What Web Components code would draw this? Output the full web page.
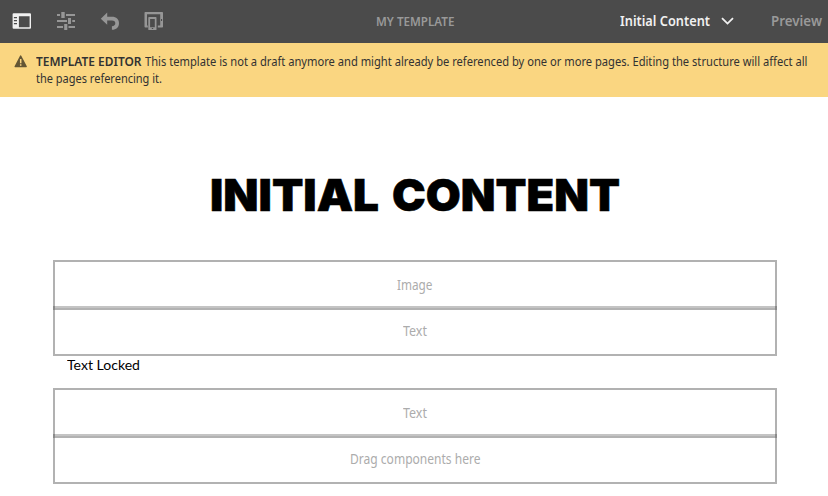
<!DOCTYPE html>
<html lang="en">
<head>
<meta charset="utf-8">
<title>Template Editor</title>
<style>
  html, body { margin: 0; height: 100%; overflow: hidden; background: #fff; }
</style>
</head>
<body>
<template-editor></template-editor>
<script>
const define = (name, html, setup) => {
  const tpl = document.createElement('template');
  tpl.innerHTML = html;
  customElements.define(name, class extends HTMLElement {
    connectedCallback() {
      if (this.shadowRoot) return;
      this.attachShadow({ mode: 'open' }).append(tpl.content.cloneNode(true));
      if (setup) setup.call(this, this.shadowRoot);
    }
  });
};

/* A single line of text condensed or widened to the given width. */
define('fit-text', `
  <style>
    :host { display: block; flex: none; white-space: nowrap; }
    span { display: inline-block; transform-origin: 0 50%; vertical-align: top; }
  </style>
  <span></span>`, function (root) {
  const span = root.querySelector('span');
  span.textContent = this.textContent;
  const width = Number(this.getAttribute('width'));
  this.style.width = width + 'px';
  const natural = span.getBoundingClientRect().width;
  if (natural) span.style.transform = 'scaleX(' + width / natural + ')';
});

define('tool-icon', `
  <style>
    :host { display: block; flex: none; width: 20px; height: 20px; color: #969696; }
    svg { display: none; width: 20px; height: 20px; overflow: visible; }
    :host([name=rail]) { color: #f0f0f0; }
    :host([name=rail]) .rail, :host([name=sliders]) .sliders,
    :host([name=undo]) .undo, :host([name=device]) .device { display: block; }
  </style>
  <svg class="rail" viewBox="0 0 20 20"><path fill="currentColor" fill-rule="evenodd" d="M1.6 2.3H18a1 1 0 0 1 1 1V16.8a1 1 0 0 1-1 1H1.6a1 1 0 0 1-1-1V3.3a1 1 0 0 1 1-1ZM6.9 5.3V16.3H17.6V5.3ZM1.9 6V7.2H5V6ZM1.9 9V10.2H5V9ZM1.9 12V13.2H5V12Z"/></svg>
  <svg class="sliders" viewBox="0 0 20 20"><path fill="currentColor" d="M1 3H4V5H1ZM5.3 1H8.7V7H5.3ZM10 3H19V5H10ZM1 9H11V11H1ZM12 7H15V13H12ZM16.3 9H19V11H16.3ZM1 15H7V17H1ZM8.2 13H11.3V19H8.2ZM12.5 15H19V17H12.5Z"/></svg>
  <svg class="undo" viewBox="0 0 20 20"><path fill="currentColor" d="M7.2 1.6V5.7H12C16.4 5.7 19 8.3 19 12.2C19 16 16.4 18.8 11.9 18.8V15.2C14.2 15.2 15.3 14 15.3 12.3C15.3 10.5 14.2 9.6 11.9 9.6H7.2V13.8L.8 7.7Z"/></svg>
  <svg class="device" viewBox="0 0 20 20"><path fill="currentColor" fill-rule="evenodd" d="M1.3 1H18.2Q19 1 19 1.8V15.8Q19 16.6 18.2 16.6H13.8V14.6H16.2V3.2H3V14.6H3.8V16.6H1.3Q.5 16.6 .5 15.8V1.8Q.5 1 1.3 1ZM17 8V10H18.1V8Z"/><path fill="currentColor" fill-rule="evenodd" d="M5 6H11.8a.7.7 0 0 1 .7.7V18.4a.7.7 0 0 1-.7.7H5a.7.7 0 0 1-.7-.7V6.7A.7.7 0 0 1 5 6ZM6.1 8V16.2H10.8V8ZM7.8 17V18H9.2V17Z"/></svg>`);

define('editor-toolbar', `
  <style>
    :host { display: flex; align-items: center; height: 43px; background: #4b4b4b; color: #999;
      font: 600 14px/20px "Noto Sans", "Open Sans", sans-serif; }
    .tools { display: flex; gap: 24px; padding-left: 12px; width: 364px; box-sizing: border-box; margin-top: -2px; }
    .name { font-size: 12px; width: 245px; padding-left: 11.5px; box-sizing: border-box; }
    .mode { display: flex; align-items: center; gap: 11px; color: #f0f0f0; width: 150.5px;
      padding-left: 11px; box-sizing: border-box; }
    svg { width: 13px; height: 8px; }
    .mode, .preview { margin-top: -1px; }
    .preview { margin-left: 11px; }
  </style>
  <div class="tools">
    <tool-icon name="rail"></tool-icon><tool-icon name="sliders"></tool-icon>
    <tool-icon name="undo"></tool-icon><tool-icon name="device"></tool-icon>
  </div>
  <div class="name"><fit-text width="78.5">MY TEMPLATE</fit-text></div>
  <div class="mode"><fit-text width="90">Initial Content</fit-text>
    <svg viewBox="0 0 13 8"><path d="M1 1.2L6.5 6.6L12 1.2" fill="none" stroke="#f0f0f0" stroke-width="1.8"/></svg></div>
  <fit-text class="preview" width="51">Preview</fit-text>`);

define('warning-banner', `
  <style>
    :host { display: flex; gap: 8.5px; height: 54px; box-sizing: border-box; padding: 10px 14px 0 14px;
      background: #fad681; color: #323232; font: 400 12.3px/17px "Noto Sans", "Open Sans", sans-serif; }
    svg { width: 13px; height: 13px; margin-top: 2px; flex: none; }
    .line { display: flex; gap: 4px; }
    .strong { font-weight: 600; }
  </style>
  <svg viewBox="0 0 13 13"><path fill="#645634" d="M6.6 0.3Q7.1 .3 7.4 .9L12.8 11.2Q13.1 12.1 12.2 12.2H1.1Q.2 12.1 .6 11.2L5.9 .9Q6.2 .3 6.6 .3Z"/><path stroke="#fad681" stroke-width="1.5" d="M6.7 4V8.3M6.7 9.3V10.8"/></svg>
  <div>
    <div class="line"><fit-text class="strong" width="105.5">TEMPLATE EDITOR</fit-text><fit-text width="662.5">This template is not a draft anymore and might already be referenced by one or more pages. Editing the structure will affect all</fit-text></div>
    <fit-text width="126">the pages referencing it.</fit-text>
  </div>`);

define('drop-zone', `
  <style>
    :host { display: flex; justify-content: center; align-items: center; height: 48px; box-sizing: border-box;
      border: 2px solid rgba(0,0,0,.3); color: #acacac; font: 400 13.8px/20px "Noto Sans", "Open Sans", sans-serif; }
    :host([first]) { border-bottom-color: rgba(0,0,0,.23); padding-top: 2px; }
    :host(:not([first])) { padding-bottom: 2px; }
  </style>
  <slot></slot>`);

define('zone-stack', `
  <style>
    :host { display: block; position: relative; width: 724px; margin: 0 auto 0 53px; }
    i { position: absolute; top: 46px; width: 2px; height: 4px; background: #8a8a8a; }
    .l { left: 0; } .r { right: 0; }
  </style>
  <slot></slot><i class="l"></i><i class="r"></i>`);

define('template-page', `
  <style>
    :host { display: block; padding-top: 68px; color: #000; }
    h1 { display: flex; gap: 13px; margin: 0 0 35px; padding-left: 210px; height: 60px;
      font: 900 44.3px/60px Inter, Lato, sans-serif; -webkit-text-stroke: .6px #000; }
    .locked { margin: -1px 0 0 67px; height: 33px; font: 400 13.8px/20px Lato, sans-serif; }
  </style>
  <h1><fit-text width="169">INITIAL</fit-text><fit-text width="228">CONTENT</fit-text></h1>
  <zone-stack>
    <drop-zone first><fit-text width="35.5">Image</fit-text></drop-zone>
    <drop-zone><fit-text width="24">Text</fit-text></drop-zone>
  </zone-stack>
  <fit-text class="locked" width="73">Text Locked</fit-text>
  <zone-stack>
    <drop-zone first><fit-text width="24">Text</fit-text></drop-zone>
    <drop-zone><fit-text width="130.5">Drag components here</fit-text></drop-zone>
  </zone-stack>`);

define('template-editor', `
  <style>:host { display: block; width: 828px; height: 496px; overflow: hidden; background: #fff; }</style>
  <editor-toolbar></editor-toolbar>
  <warning-banner></warning-banner>
  <template-page></template-page>`);
</script>
</body>
</html>
